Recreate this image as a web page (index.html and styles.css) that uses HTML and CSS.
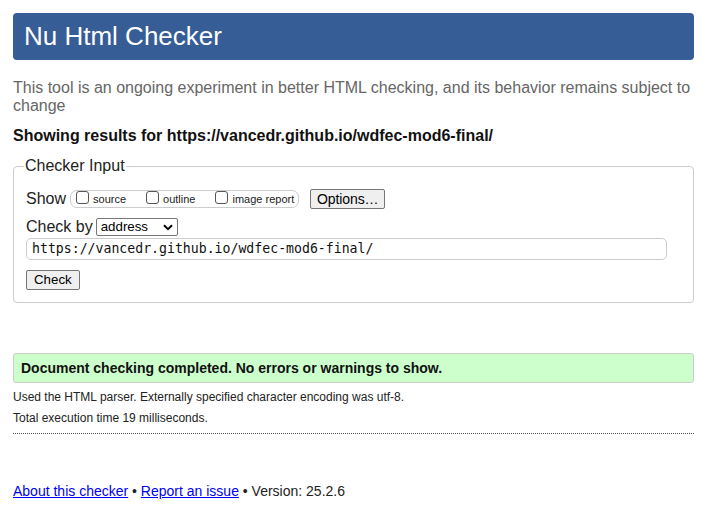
FILE: index.html
```html
<!DOCTYPE html>
<html>
<head>
<meta charset="utf-8">
<link rel="stylesheet" href="styles.css">
</head>
<body>
<div class="page">
  <h1 class="title">Nu Html Checker</h1>
  <p class="desc">This tool is an ongoing experiment in better HTML checking, and its behavior remains subject to change</p>
  <p class="showing">Showing results for https://vancedr.github.io/wdfec-mod6-final/</p>
  <fieldset class="input">
    <legend>Checker Input</legend>
    <div class="row show-row">
      <span class="lbl">Show</span>
      <span class="opts">
        <label class="opt"><span class="cb"></span>source</label>
        <label class="opt"><span class="cb"></span>outline</label>
        <label class="opt"><span class="cb"></span>image report</label>
      </span>
      <span class="btn options">Options…</span>
    </div>
    <div class="row by-row">
      <span class="lbl">Check by</span>
      <span class="select">address<svg width="10" height="7" viewBox="0 0 10 7"><path d="M1 1.2 L5 5.2 L9 1.2" fill="none" stroke="#000" stroke-width="2"/></svg></span>
    </div>
    <div class="url">https://vancedr.github.io/wdfec-mod6-final/</div>
    <div class="row check-row"><span class="btn check">Check</span></div>
  </fieldset>
  <div class="success">Document checking completed. No errors or warnings to show.</div>
  <p class="small">Used the HTML parser. Externally specified character encoding was utf-8.</p>
  <p class="small">Total execution time 19 milliseconds.</p>
  <hr class="dots">
  <p class="footer"><a href="#">About this checker</a> • <a href="#">Report an issue</a> • Version: 25.2.6</p>
</div>
</body>
</html>
```
FILE: styles.css
```css
html, body { margin: 0; padding: 0; background: #fff; }
body { font-family: "Liberation Sans", Arial, sans-serif; color: #000; }
.page { padding: 13px 14px 0 13px; }
.title {
  margin: 0;
  background: #365d95;
  color: #fff;
  font-weight: normal;
  font-size: 26px;
  height: 47px;
  line-height: 47px;
  padding: 0 11px;
  border-radius: 4px;
}
.desc { margin: 19px 0 0; font-size: 16px; line-height: 18px; color: #666; }
.showing { margin: 11px 0 0; font-size: 16px; font-weight: bold; line-height: 20px; color: #111; }
.input {
  margin: 11px 0 0;
  border: 1px solid #ccc;
  border-radius: 4px;
  padding: 9px 12px 12px 12px;
  min-width: 0;
}
.input legend { font-size: 16px; padding: 0 1px; margin-left: -2px; color: #222; }
.row { display: flex; align-items: center; }
.lbl { font-size: 16px; color: #222; }
.show-row { height: 20px; margin-top: 5px; }
.opts {
  display: flex;
  align-items: center;
  margin-left: 4px;
  height: 16px;
  border: 1px solid #ccc;
  border-radius: 7px;
  padding: 0 0 0 5px;
  width: 222px;
}
.opt { display: flex; align-items: center; font-size: 11px; color: #222; margin-right: 20px; }
.opt:last-child { margin-right: 0; }
.cb {
  width: 13px; height: 13px;
  border: 1px solid #555;
  border-radius: 3px;
  margin-right: 4px;
  box-sizing: border-box;
  margin-top: -3px;
}
.btn {
  display: inline-block;
  font-size: 14px;
  background: #efefef;
  border: 1px solid #767676;
  border-radius: 2px;
  color: #000;
  padding: 1px 6px 1px 6px;
  line-height: 16px;
}
.options { margin-left: 11px; letter-spacing: -0.1px; }
.select {
  display: inline-flex;
  align-items: center;
  justify-content: space-between;
  margin-left: 3px;
  width: 82px;
  height: 18px;
  box-sizing: border-box;
  border: 1px solid #767676;
  border-radius: 2px;
  font-size: 13.3px;
  padding: 0 4px 0 4px;
  line-height: 16px;
}
.by-row { margin-top: 9px; }
.url {
  margin-top: 2px;
  height: 22px;
  box-sizing: border-box;
  border: 1px solid #ccc;
  border-radius: 5px;
  font-family: "DejaVu Sans Mono", "Liberation Mono", monospace;
  font-size: 13.2px;
  line-height: 20px;
  padding: 0 5px;
  width: 641px;
  color: #111;
}
.check-row { margin-top: 10px; }
.check { padding: 1px 7px; font-size: 13.3px; }
.success {
  margin-top: 50px;
  background: #ccffcc;
  border: 1px solid #ccc;
  border-radius: 3px;
  height: 30px;
  box-sizing: border-box;
  line-height: 28px;
  padding: 0 7px;
  font-size: 14px;
  font-weight: bold;
  color: #111;
}
.small { font-size: 12px; margin: 7px 0 0; line-height: 14px; color: #222; }
.small + .small { margin-top: 7px; }
.dots { margin: 8px 0 0; border: 0; border-top: 1px dotted #555; height: 0; }
.footer { margin: 49px 0 0; font-size: 14px; line-height: 16px; color: #222; }
.footer a { color: #0000ee; }
```
